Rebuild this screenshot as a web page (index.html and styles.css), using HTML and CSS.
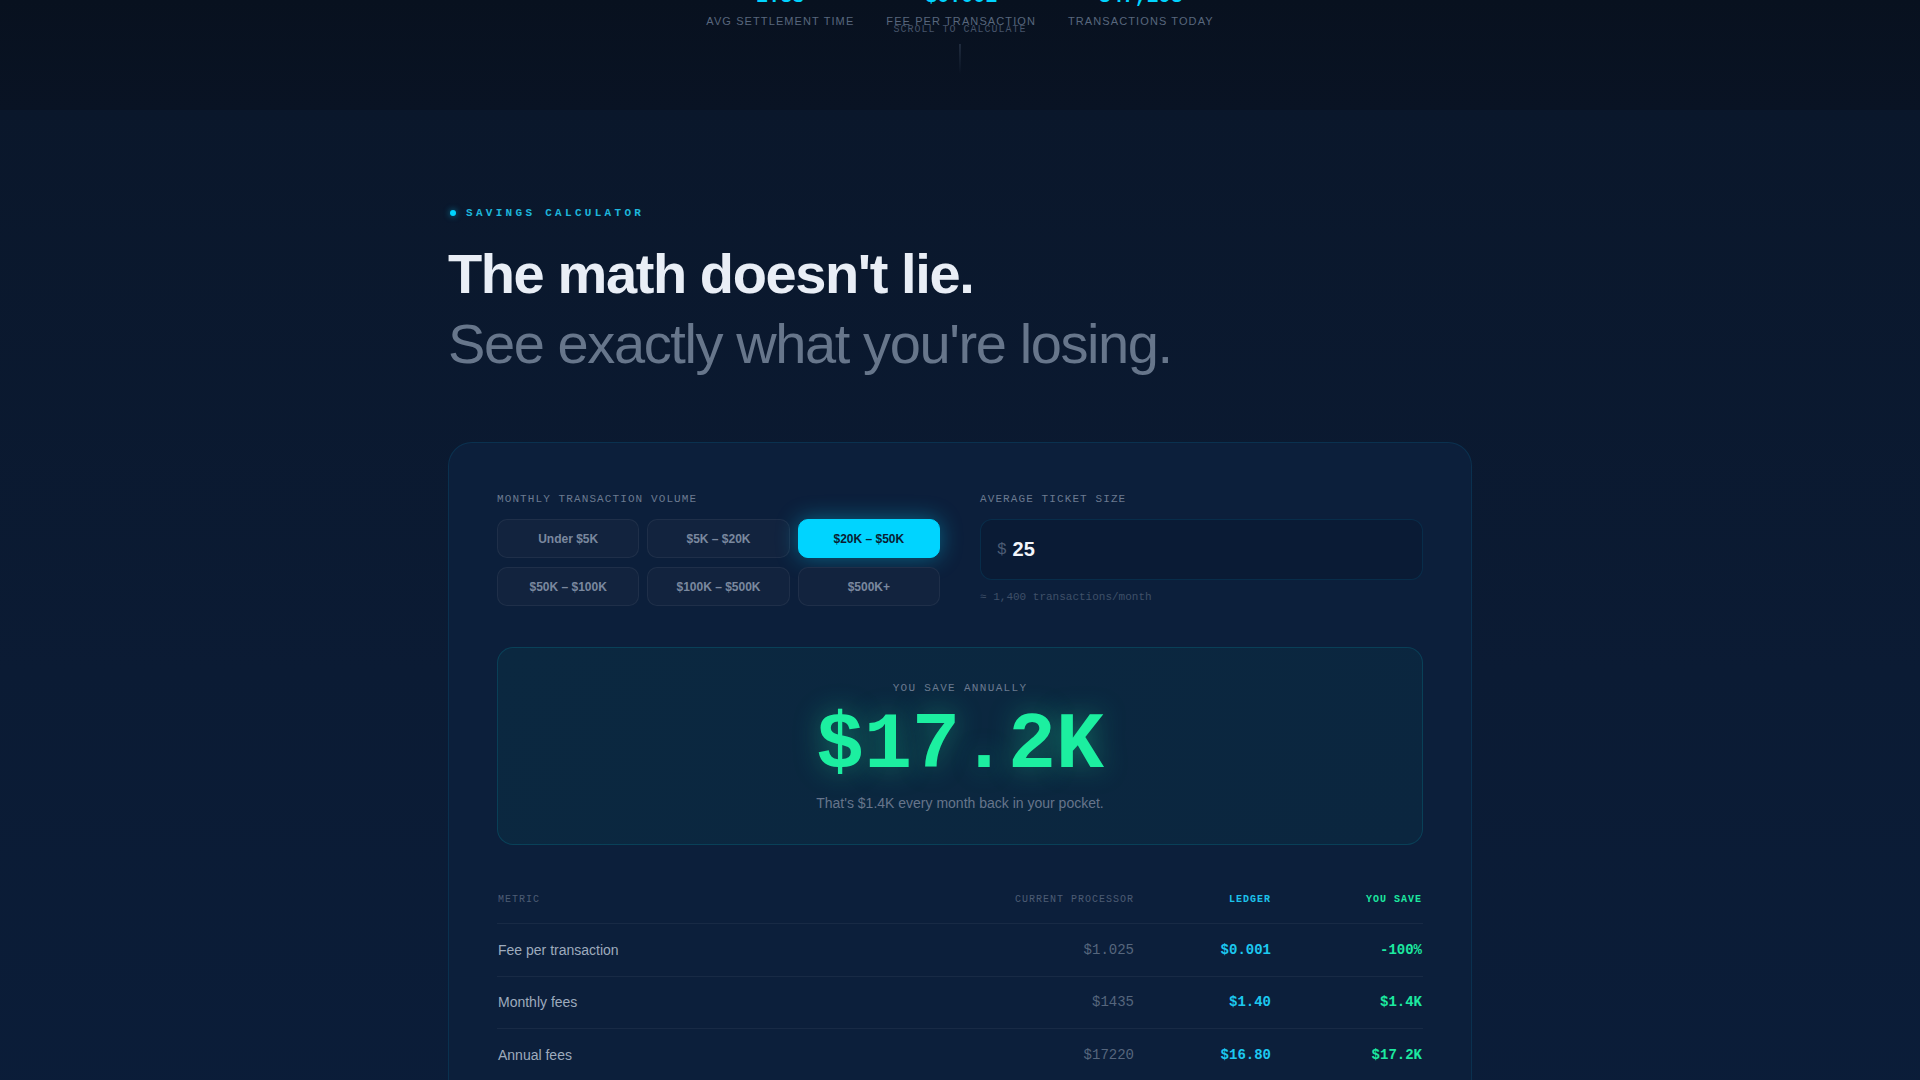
FILE: index.html
```html
<!DOCTYPE html>
<html lang="en">
<head>
<meta charset="utf-8">
<title>Savings Calculator</title>
<link rel="stylesheet" href="styles.css">
</head>
<body>
<header class="hero">
  <div class="stats">
    <div class="stat">
      <div class="stat-value">2.3s</div>
      <div class="stat-label">AVG SETTLEMENT TIME</div>
    </div>
    <div class="stat">
      <div class="stat-value">$0.001</div>
      <div class="stat-label">FEE PER TRANSACTION</div>
    </div>
    <div class="stat">
      <div class="stat-value">847,293</div>
      <div class="stat-label">TRANSACTIONS TODAY</div>
    </div>
  </div>
  <div class="scroll-hint">
    <span class="scroll-text">SCROLL TO CALCULATE</span>
    <span class="scroll-line"></span>
  </div>
</header>

<main class="section">
  <div class="container">
    <div class="eyebrow"><span class="eyebrow-dot"></span>SAVINGS CALCULATOR</div>
    <h2 class="title">The math doesn't lie.<span class="title-sub">See exactly what you're losing.</span></h2>

    <div class="card">
      <div class="inputs">
        <div class="field">
          <div class="field-label">MONTHLY TRANSACTION VOLUME</div>
          <div class="volume-grid">
            <button class="vol-btn">Under $5K</button>
            <button class="vol-btn">$5K – $20K</button>
            <button class="vol-btn active">$20K – $50K</button>
            <button class="vol-btn">$50K – $100K</button>
            <button class="vol-btn">$100K – $500K</button>
            <button class="vol-btn">$500K+</button>
          </div>
        </div>
        <div class="field">
          <div class="field-label">AVERAGE TICKET SIZE</div>
          <div class="ticket-input">
            <span class="ticket-currency">$</span>
            <span class="ticket-value">25</span>
          </div>
          <div class="ticket-hint">≈ 1,400 transactions/month</div>
        </div>
      </div>

      <div class="savings">
        <div class="savings-label">YOU SAVE ANNUALLY</div>
        <div class="savings-value">$17.2K</div>
        <div class="savings-sub">That's $1.4K every month back in your pocket.</div>
      </div>

      <table class="compare">
        <thead>
          <tr>
            <th class="col-metric">METRIC</th>
            <th class="col-current">CURRENT PROCESSOR</th>
            <th class="col-ledger">LEDGER</th>
            <th class="col-save">YOU SAVE</th>
          </tr>
        </thead>
        <tbody>
          <tr>
            <td class="cell-metric">Fee per transaction</td>
            <td class="cell-current">$1.025</td>
            <td class="cell-ledger">$0.001</td>
            <td class="cell-save">-100%</td>
          </tr>
          <tr>
            <td class="cell-metric">Monthly fees</td>
            <td class="cell-current">$1435</td>
            <td class="cell-ledger">$1.40</td>
            <td class="cell-save">$1.4K</td>
          </tr>
          <tr>
            <td class="cell-metric">Annual fees</td>
            <td class="cell-current">$17220</td>
            <td class="cell-ledger">$16.80</td>
            <td class="cell-save">$17.2K</td>
          </tr>
        </tbody>
      </table>
    </div>
  </div>
</main>
</body>
</html>
```

FILE: styles.css
```css
* { box-sizing: border-box; }

html, body {
  margin: 0;
  padding: 0;
}

body {
  background: #0b1b35;
  font-family: "Liberation Sans", Arial, sans-serif;
  color: #e8edf5;
  overflow: hidden;
}

.hero {
  position: relative;
  height: 110px;
  background: linear-gradient(180deg, #08111f 0%, #091324 100%);
  overflow: hidden;
}

.stats {
  display: flex;
  justify-content: center;
  gap: 32px;
  margin-top: -13px;
}

.stat {
  text-align: center;
}

.stat-value {
  font-family: "Liberation Mono", monospace;
  font-weight: 700;
  font-size: 20px;
  line-height: 20px;
  color: #00d4ff;
}

.stat-label {
  margin-top: 6px;
  font-size: 11px;
  line-height: 16px;
  letter-spacing: 0.1em;
  color: #58677d;
}

.scroll-hint {
  position: absolute;
  top: 23px;
  left: 50%;
  transform: translateX(-50%);
  display: flex;
  flex-direction: column;
  align-items: center;
  gap: 7px;
}

.scroll-text {
  font-family: "Liberation Mono", monospace;
  font-size: 10px;
  line-height: 14px;
  letter-spacing: 0.1em;
  color: #46546a;
  white-space: nowrap;
}

.scroll-line {
  width: 1px;
  height: 30px;
  background: linear-gradient(180deg, rgba(110, 130, 160, 0.45), rgba(110, 130, 160, 0));
}

.section {
  min-height: 970px;
  background: linear-gradient(180deg, #0a172b 0%, #0b1b34 55%, #0b1d39 100%);
  padding-top: 96px;
}

.container {
  width: 1024px;
  margin: 0 auto;
}

.eyebrow {
  display: flex;
  align-items: center;
  gap: 10px;
  padding-left: 2px;
  font-family: "Liberation Mono", monospace;
  font-weight: 700;
  font-size: 11px;
  line-height: 14px;
  letter-spacing: 0.3em;
  color: #1db6dc;
}

.eyebrow-dot {
  width: 6px;
  height: 6px;
  border-radius: 50%;
  background: #00d4ff;
  box-shadow: 0 0 6px rgba(0, 212, 255, 0.6);
}

.title {
  margin: 19px 0 0;
  font-size: 56px;
  line-height: 1.25;
  font-weight: 700;
  letter-spacing: -0.025em;
  color: #e9eef6;
}

.title-sub {
  display: block;
  font-weight: 400;
  color: #67768b;
}

.card {
  margin-top: 63px;
  border: 1px solid rgba(0, 180, 230, 0.12);
  border-radius: 24px;
  background: #0c1f3b;
  padding: 48px 48px 48px;
}

.inputs {
  display: grid;
  grid-template-columns: 1fr 1fr;
  gap: 40px;
}

.field-label {
  font-family: "Liberation Mono", monospace;
  font-size: 11px;
  line-height: 16px;
  letter-spacing: 0.1em;
  color: #6b7a90;
  margin-bottom: 12px;
}

.volume-grid {
  display: grid;
  grid-template-columns: repeat(3, 1fr);
  gap: 9px 8px;
}

.vol-btn {
  height: 39px;
  border: 1px solid rgba(255, 255, 255, 0.06);
  border-radius: 10px;
  background: #12233e;
  font-family: "Liberation Sans", Arial, sans-serif;
  font-weight: 700;
  font-size: 12px;
  color: #7a889e;
  padding: 0;
}

.vol-btn.active {
  background: #00d4ff;
  border-color: #00d4ff;
  color: #0a1d33;
  box-shadow: 0 0 22px rgba(0, 212, 255, 0.38);
}

.ticket-input {
  height: 61px;
  display: flex;
  align-items: center;
  gap: 6px;
  padding: 0 16px;
  border: 1px solid rgba(0, 180, 230, 0.12);
  border-radius: 12px;
  background: #0a1b35;
}

.ticket-currency {
  font-family: "Liberation Mono", monospace;
  font-size: 16px;
  color: #4d5d75;
}

.ticket-value {
  font-weight: 700;
  font-size: 20px;
  color: #f2f5fa;
}

.ticket-hint {
  margin-top: 10px;
  font-family: "Liberation Mono", monospace;
  font-size: 11px;
  line-height: 14px;
  color: #3f5068;
}

.savings {
  margin-top: 41px;
  padding: 32px 24px 31px;
  border: 1px solid rgba(0, 200, 220, 0.16);
  border-radius: 16px;
  background: linear-gradient(135deg, #0b2840 0%, #0b263f 100%);
  text-align: center;
}

.savings-label {
  font-family: "Liberation Mono", monospace;
  font-size: 11px;
  line-height: 16px;
  letter-spacing: 0.12em;
  color: #6b7a90;
}

.savings-value {
  margin-top: 10px;
  font-family: "Liberation Mono", monospace;
  font-weight: 700;
  font-size: 80px;
  line-height: 80px;
  color: #1cefa0;
  text-shadow: 0 0 28px rgba(28, 239, 160, 0.38);
}

.savings-sub {
  margin-top: 7px;
  font-size: 14px;
  line-height: 20px;
  color: #66758b;
}

.compare {
  width: 100%;
  margin-top: 48px;
  border-collapse: collapse;
}

.compare th {
  padding: 0 0 16px;
  font-family: "Liberation Mono", monospace;
  font-size: 10px;
  line-height: 14px;
  letter-spacing: 0.1em;
  font-weight: 400;
  color: #4c5c74;
  border-bottom: 1px solid rgba(255, 255, 255, 0.05);
}

.compare td {
  padding: 17.5px 0 17px;
  line-height: 17px;
  border-bottom: 1px solid rgba(255, 255, 255, 0.05);
}

.compare th:first-child,
.compare td:first-child {
  padding-left: 1px;
}

.compare th:last-child,
.compare td:last-child {
  padding-right: 1px;
}

.col-metric { text-align: left; }
.col-current { text-align: right; width: 200px; }
.col-ledger { text-align: right; width: 137px; }
.col-save { text-align: right; width: 152px; }

.compare th.col-ledger { color: #1cc3ec; font-weight: 700; }
.compare th.col-save { color: #1ce9a0; font-weight: 700; }

.cell-metric {
  font-size: 14px;
  color: #9eabbd;
}

.cell-current,
.cell-ledger,
.cell-save {
  text-align: right;
  font-family: "Liberation Mono", monospace;
  font-size: 14px;
}

.cell-current { color: #56667d; }
.cell-ledger { color: #1cc8f0; font-weight: 700; }
.cell-save { color: #1ce9a0; font-weight: 700; }
```
